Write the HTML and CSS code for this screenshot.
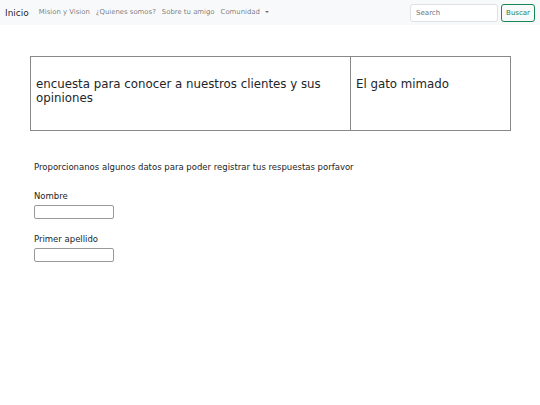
FILE: index.html
```html
<!DOCTYPE html>
<html lang="es">
<head>
<meta charset="utf-8">
<title>Encuesta</title>
<link rel="stylesheet" href="styles.css">
</head>
<body>
<nav class="navbar">
  <a class="brand" href="#">Inicio</a>
  <ul class="nav-links">
    <li><a href="#">Mision y Vision</a></li>
    <li><a href="#">¿Quienes somos?</a></li>
    <li><a href="#">Sobre tu amigo</a></li>
    <li><a href="#" class="dropdown">Comunidad <span class="caret"></span></a></li>
  </ul>
  <form class="search">
    <input class="search-input" type="text" placeholder="Search">
    <button class="search-btn" type="button">Buscar</button>
  </form>
</nav>
<main class="content">
  <table class="header-table">
    <tr>
      <td class="title-cell">encuesta para conocer a nuestros clientes y sus opiniones</td>
      <td class="brand-cell">El gato mimado</td>
    </tr>
  </table>
  <p class="intro">Proporcionanos algunos datos para poder registrar tus respuestas porfavor</p>
  <div class="field">
    <label class="label">Nombre</label>
    <input class="text-input" type="text">
  </div>
  <div class="field">
    <label class="label">Primer apellido</label>
    <input class="text-input" type="text">
  </div>
</main>
</body>
</html>
```
FILE: styles.css
```css
* { box-sizing: border-box; }
body {
  margin: 0;
  font-family: "DejaVu Sans", sans-serif;
  color: #212529;
  background: #fff;
}
.navbar {
  display: flex;
  align-items: center;
  height: 25px;
  padding: 0 5px 0 5px;
  background: #f8f9fa;
  line-height: 1.2;
}
.brand {
  font-size: 9px;
  color: rgba(0,0,0,.9);
  text-decoration: none;
  margin-right: 10px;
  padding-top: 1px;
}
.nav-links {
  display: flex;
  align-items: center;
  list-style: none;
  margin: 0;
  padding: 0;
  gap: 6px;
  flex: 1;
  font-size: 6.9px;
}
.nav-links a {
  font-size: 6.9px;
  color: rgba(0,0,0,.55);
  text-decoration: none;
}
.caret {
  display: inline-block;
  width: 0;
  height: 0;
  margin-left: 3px;
  vertical-align: 1px;
  border-top: 2.5px solid rgba(0,0,0,.55);
  border-left: 2.5px solid transparent;
  border-right: 2.5px solid transparent;
}
.search {
  display: flex;
  gap: 3px;
  margin: 0;
}
.search-input {
  width: 88px;
  height: 18px;
  border: 1px solid #dee2e6;
  border-radius: 3px;
  padding: 0 5px;
  font-family: inherit;
  font-size: 7px;
  color: #212529;
  background: #fff;
}
.search-input::placeholder { color: #6c757d; }
.search-btn {
  height: 18px;
  padding: 0 4px;
  border: 1px solid #198754;
  border-radius: 3px;
  background: transparent;
  color: #198754;
  font-family: inherit;
  font-size: 7px;
}
.content {
  padding: 31px 30px 0 30px;
}
.header-table {
  width: 481px;
  height: 75px;
  border-collapse: collapse;
  border: 1px solid #888;
}
.header-table td {
  border: 1px solid #888;
  vertical-align: top;
  padding: 20px 5px 0 5px;
  font-size: 11.8px;
  line-height: 14px;
}
.title-cell { width: 320px; }
.intro {
  font-size: 8.5px;
  margin: 31px 0 0 4px;
}
.field {
  margin: 19px 0 0 4px;
  display: flex;
  flex-direction: column;
  align-items: flex-start;
}
.field + .field { margin-top: 15px; }
.label {
  font-size: 8.5px;
  line-height: 11px;
  margin-bottom: 3px;
}
.text-input {
  width: 80px;
  height: 14px;
  border: 1px solid #999;
  border-radius: 2px;
  padding: 0;
}
```
